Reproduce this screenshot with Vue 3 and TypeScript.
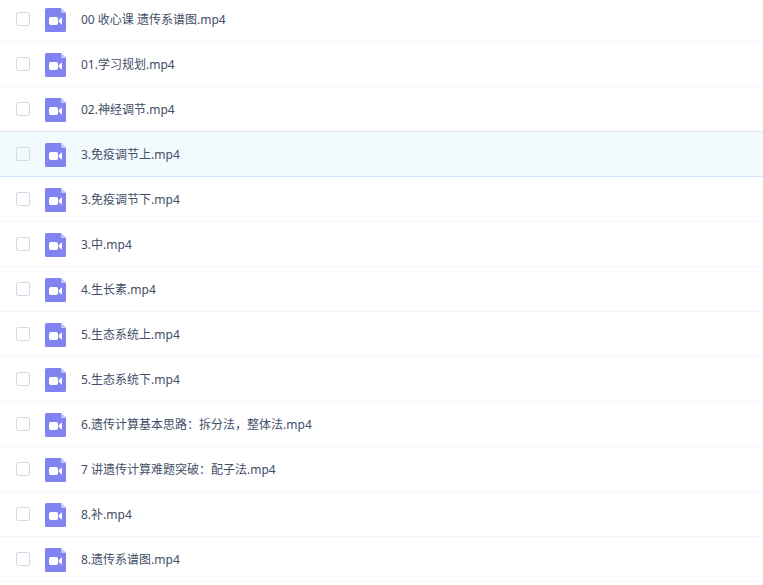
<script setup lang="ts">
import { ref } from 'vue'

interface VideoFile {
  name: string
  active?: boolean
}

const files: VideoFile[] = [
  { name: '00 收心课 遗传系谱图.mp4' },
  { name: '01.学习规划.mp4' },
  { name: '02.神经调节.mp4' },
  { name: '3.免疫调节上.mp4', active: true },
  { name: '3.免疫调节下.mp4' },
  { name: '3.中.mp4' },
  { name: '4.生长素.mp4' },
  { name: '5.生态系统上.mp4' },
  { name: '5.生态系统下.mp4' },
  { name: '6.遗传计算基本思路：拆分法，整体法.mp4' },
  { name: '7 讲遗传计算难题突破：配子法.mp4' },
  { name: '8.补.mp4' },
  { name: '8.遗传系谱图.mp4' },
]

const selected = ref<string[]>([])
</script>

<template>
  <ul class="file-list">
    <li
      v-for="(file, index) in files"
      :key="file.name"
      class="file-row"
      :class="{ active: file.active }"
    >
      <input
        :id="`file-${index}`"
        v-model="selected"
        class="check"
        type="checkbox"
        :value="file.name"
      />
      <svg class="icon" viewBox="0 0 21 26" aria-hidden="true">
        <path
          d="M1.5 2H16L21 7V24.5A1.5 1.5 0 0 1 19.5 26H1.5A1.5 1.5 0 0 1 0 24.5V3.500A1.5 1.5 0 0 1 1.5 2Z"
          fill="#8183f1"
        />
        <path d="M16 2L21 7H17.2A1.2 1.2 0 0 1 16 5.800Z" fill="#c3c4fa" />
        <rect x="4" y="11" width="9" height="8" rx="1.800" fill="#fff" />
        <path d="M17 11.300V18.700L14.400 16.600Q13.700 16 13.700 15.300V14.700Q13.700 14 14.400 13.400Z" fill="#fff" />
      </svg>
      <label class="name" :for="`file-${index}`">{{ file.name }}</label>
    </li>
  </ul>
</template>

<style>
body {
  margin: 0;
  background: #fff;
}
</style>

<style scoped>
.file-list {
  /* The list is scrolled slightly past its first row's top edge. */
  margin: -3px 0 0;
  padding: 0;
  list-style: none;
  font-family: "Noto Sans", "Noto Sans CJK SC", sans-serif;
  font-size: 12px;
  color: #424e67;
}

.file-row {
  display: flex;
  align-items: center;
  height: 44px;
  padding: 0 16px;
  border-bottom: 1px solid #f2f6fd;
}

.file-row.active {
  margin-top: -1px;
  border-top: 1px solid #d9eaf8;
  border-bottom-color: #d4e8fa;
  background: #f3fafe;
}

.check {
  appearance: none;
  box-sizing: border-box;
  flex: none;
  width: 14px;
  height: 14px;
  margin: 0 15px 0 0;
  border: 1px solid #d3dae5;
  border-radius: 2px;
  background: transparent;
}

.check:checked {
  border-color: #8183f1;
  background: #8183f1;
}

.icon {
  flex: none;
  width: 21px;
  height: 26px;
  margin-right: 15px;
}

.name {
  overflow: hidden;
  padding-top: 2px;
  line-height: 18px;
  white-space: nowrap;
  text-overflow: ellipsis;
}
</style>
